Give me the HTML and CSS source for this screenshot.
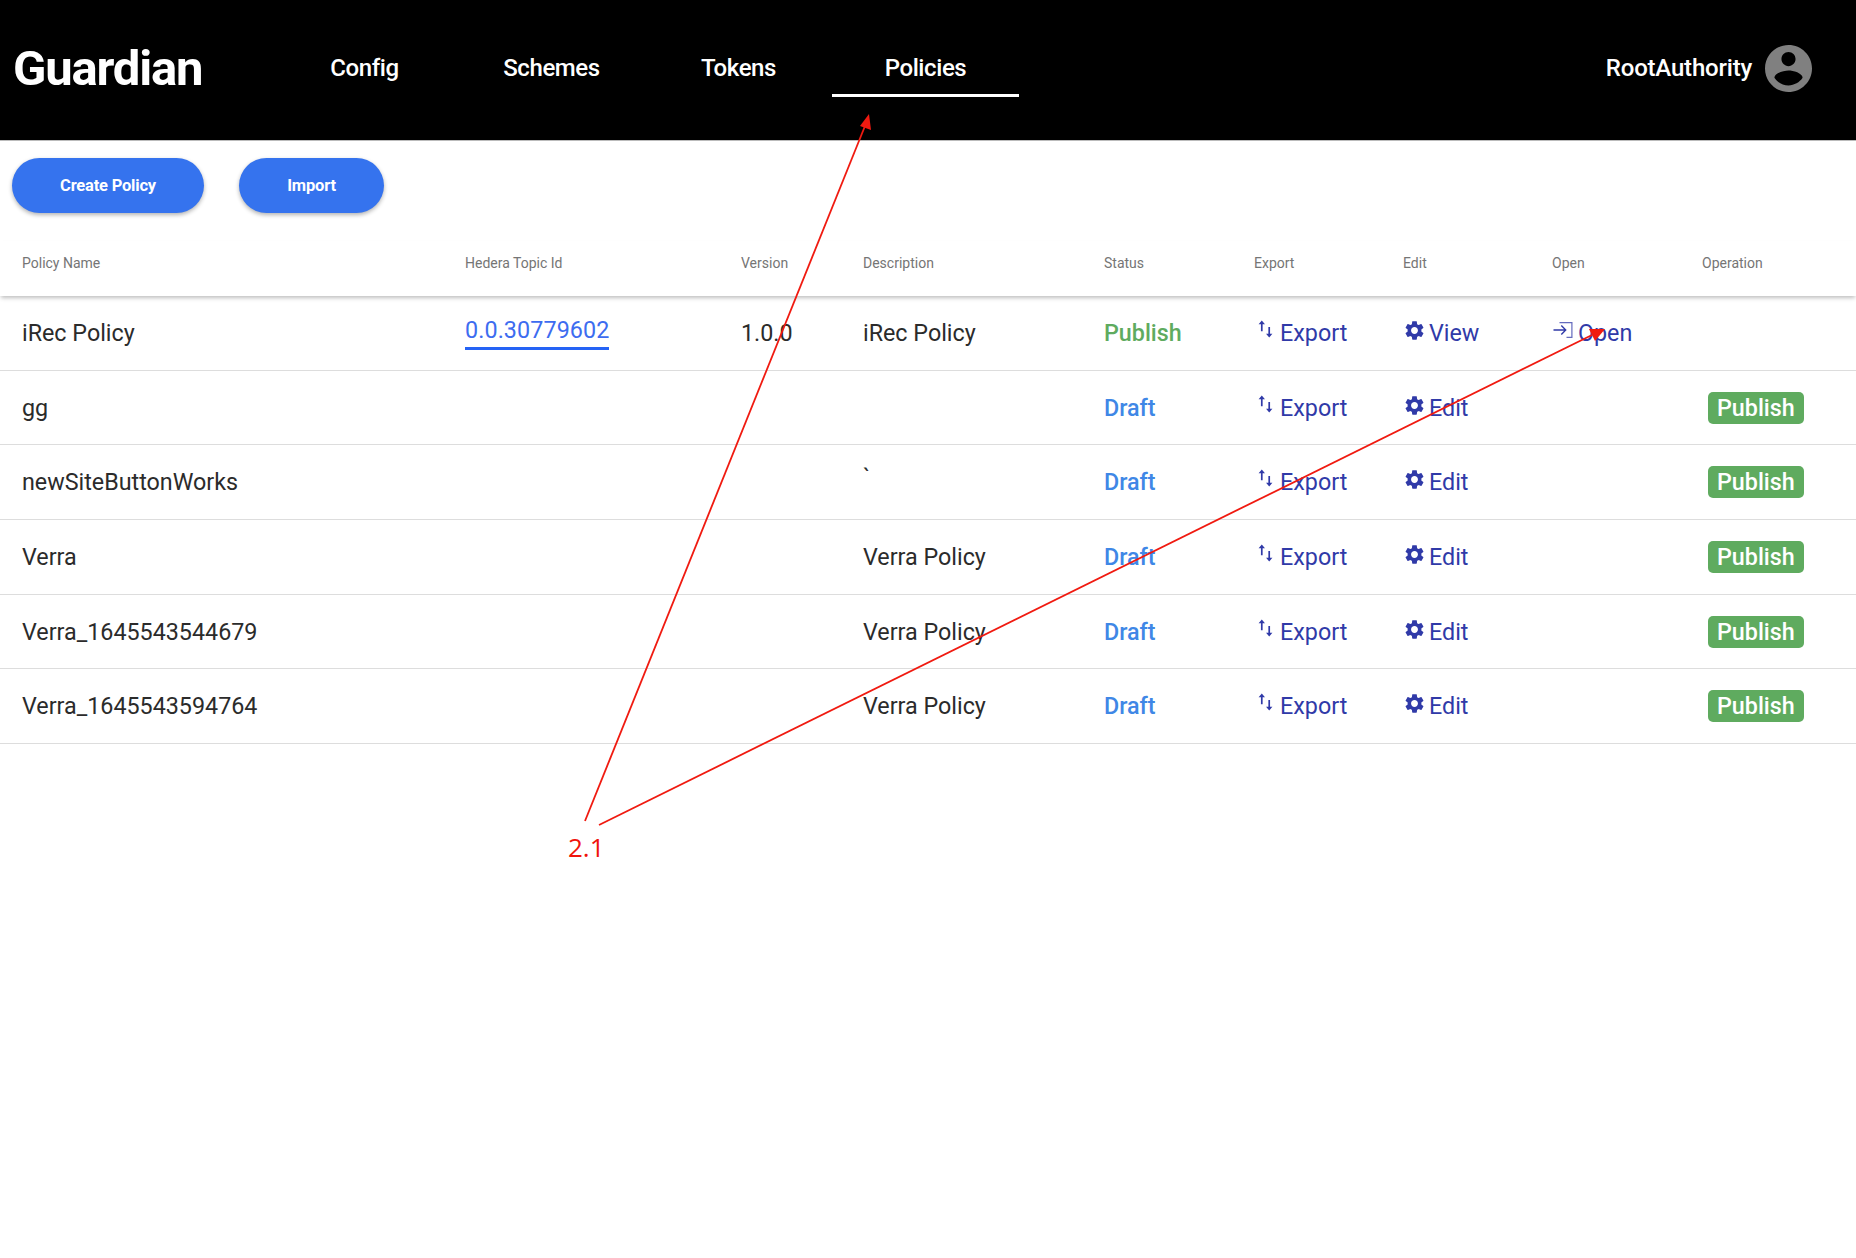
FILE: index.html
```html
<!DOCTYPE html>
<html lang="en">
<head>
  <meta charset="UTF-8">
  <link rel="stylesheet" href="styles.css">
  <title>Guardian</title>
</head>
<body>
  <svg class="defs" width="0" height="0">
    <symbol id="gear" viewBox="0 0 24 24"><path d="M19.14 12.94c.04-.3.06-.61.06-.94 0-.32-.02-.64-.07-.94l2.03-1.58c.18-.14.23-.41.12-.61l-1.92-3.32c-.12-.22-.37-.29-.59-.22l-2.39.96c-.5-.38-1.03-.7-1.62-.94l-.36-2.54c-.04-.24-.24-.41-.48-.41h-3.84c-.24 0-.43.17-.47.41l-.36 2.54c-.59.24-1.13.57-1.62.94l-2.39-.96c-.22-.08-.47 0-.59.22L2.74 8.87c-.12.21-.08.47.12.61l2.03 1.58c-.05.3-.09.63-.09.94s.02.64.07.94l-2.03 1.58c-.18.14-.23.41-.12.61l1.92 3.32c.12.22.37.29.59.22l2.39-.96c.5.38 1.03.7 1.62.94l.36 2.54c.05.24.24.41.48.41h3.84c.24 0 .44-.17.47-.41l.36-2.54c.59-.24 1.13-.56 1.62-.94l2.39.96c.22.08.47 0 .59-.22l1.92-3.32c.12-.22.07-.47-.12-.61l-2.01-1.58zM12 15.6c-1.98 0-3.6-1.62-3.6-3.6s1.62-3.6 3.6-3.6 3.6 1.62 3.6 3.6-1.62 3.6-3.6 3.6z"/></symbol>
    <symbol id="swap" viewBox="0 0 16 18"><path d="M4.500 1 1.500 4.600h2.200V11h1.600V4.600h2.200zM11.500 17l3-3.600h-2.200V7h-1.600v6.400H8.500z"/></symbol>
    <symbol id="enter" viewBox="0 0 20 18"><path d="M0 8.200h10.500L7.300 5l1-1 4.900 5-4.900 5-1-1 3.200-3.300H0z"/><path d="M6 1h13v16H13v-1.200h4.800V2.200H6z" opacity=".75"/></symbol>
  </svg>

  <header class="topbar">
    <div class="logo">Guardian</div>
    <nav class="tabs">
      <a class="tab">Config</a>
      <a class="tab">Schemes</a>
      <a class="tab">Tokens</a>
      <a class="tab active">Policies</a>
    </nav>
    <div class="user">
      <span>RootAuthority</span>
      <svg class="avatar" viewBox="2 2 20 20"><path d="M12 2C6.480 2 2 6.480 2 12s4.480 10 10 10 10-4.480 10-10S17.520 2 12 2zm0 3c1.660 0 3 1.340 3 3s-1.340 3-3 3-3-1.340-3-3 1.340-3 3-3zm0 14.200c-2.500 0-4.710-1.280-6-3.220.03-1.990 4-3.080 6-3.080 1.990 0 5.970 1.090 6 3.080-1.290 1.940-3.500 3.220-6 3.220z"/></svg>
    </div>
  </header>

  <div class="actions">
    <button class="pill pill-create">Create Policy</button>
    <button class="pill pill-import">Import</button>
  </div>

  <div class="policies">
    <div class="row head">
      <div>Policy Name</div><div>Hedera Topic Id</div><div>Version</div><div>Description</div>
      <div>Status</div><div>Export</div><div>Edit</div><div>Open</div><div>Operation</div>
    </div>

    <div class="row">
      <div>iRec Policy</div>
      <div><a class="topic">0.0.30779602</a></div>
      <div>1.0.0</div>
      <div>iRec Policy</div>
      <div class="published">Publish</div>
      <div><a class="act"><svg class="ic-swap"><use href="#swap"/></svg>Export</a></div>
      <div><a class="act"><svg class="ic-gear"><use href="#gear"/></svg>View</a></div>
      <div><a class="act"><svg class="ic-enter"><use href="#enter"/></svg>Open</a></div>
      <div></div>
    </div>
    <div class="row">
      <div>gg</div><div></div><div></div><div></div>
      <div class="draft">Draft</div>
      <div><a class="act"><svg class="ic-swap"><use href="#swap"/></svg>Export</a></div>
      <div><a class="act"><svg class="ic-gear"><use href="#gear"/></svg>Edit</a></div>
      <div></div>
      <div><span class="publish-btn">Publish</span></div>
    </div>
    <div class="row">
      <div>newSiteButtonWorks</div><div></div><div></div><div class="tick">`</div>
      <div class="draft">Draft</div>
      <div><a class="act"><svg class="ic-swap"><use href="#swap"/></svg>Export</a></div>
      <div><a class="act"><svg class="ic-gear"><use href="#gear"/></svg>Edit</a></div>
      <div></div>
      <div><span class="publish-btn">Publish</span></div>
    </div>
    <div class="row">
      <div>Verra</div><div></div><div></div><div>Verra Policy</div>
      <div class="draft">Draft</div>
      <div><a class="act"><svg class="ic-swap"><use href="#swap"/></svg>Export</a></div>
      <div><a class="act"><svg class="ic-gear"><use href="#gear"/></svg>Edit</a></div>
      <div></div>
      <div><span class="publish-btn">Publish</span></div>
    </div>
    <div class="row">
      <div>Verra_1645543544679</div><div></div><div></div><div>Verra Policy</div>
      <div class="draft">Draft</div>
      <div><a class="act"><svg class="ic-swap"><use href="#swap"/></svg>Export</a></div>
      <div><a class="act"><svg class="ic-gear"><use href="#gear"/></svg>Edit</a></div>
      <div></div>
      <div><span class="publish-btn">Publish</span></div>
    </div>
    <div class="row">
      <div>Verra_1645543594764</div><div></div><div></div><div>Verra Policy</div>
      <div class="draft">Draft</div>
      <div><a class="act"><svg class="ic-swap"><use href="#swap"/></svg>Export</a></div>
      <div><a class="act"><svg class="ic-gear"><use href="#gear"/></svg>Edit</a></div>
      <div></div>
      <div><span class="publish-btn">Publish</span></div>
    </div>
  </div>

  <!-- annotation drawn on top of the screenshot -->
  <svg class="notes" width="1856" height="1258" viewBox="0 0 1856 1258">
    <line x1="585" y1="821" x2="865" y2="126"/>
    <polygon points="869,114 871,130 860,126"/>
    <line x1="599" y1="825" x2="1592" y2="335"/>
    <polygon points="1605,329 1595,341 1589,329"/>
  </svg>
  <div class="note-label">2.1</div>
</body>
</html>
```

FILE: styles.css
```css
body {
  margin: 0;
  width: 1856px;
  height: 1258px;
  overflow: hidden;
  position: relative;
  background: #fff;
  font-family: Roboto, sans-serif;
  color: #2b2b2b;
}

.defs {
  position: absolute;
}

/* header */
.topbar {
  height: 141px;
  box-sizing: border-box;
  background: #000;
  border-bottom: 1px solid #bbb;
  display: flex;
  align-items: center;
  color: #fff;
  padding-bottom: 4px;
}

.logo {
  width: 271px;
  padding-left: 13px;
  box-sizing: border-box;
  font-size: 49px;
  font-weight: 700;
  letter-spacing: -1.2px;
}

.tabs {
  display: flex;
  height: 97px;
  align-self: flex-start;
}

.tab {
  width: 187px;
  display: flex;
  align-items: flex-end;
  justify-content: center;
  box-sizing: border-box;
  padding-bottom: 15px;
  font-size: 24px;
  font-weight: 500;
  letter-spacing: -0.4px;
}

.tab.active {
  border-bottom: 3px solid #fff;
  padding-bottom: 12px;
}

.user {
  margin-left: auto;
  margin-right: 44px;
  display: flex;
  align-items: center;
  gap: 13px;
  font-size: 24px;
  font-weight: 500;
  letter-spacing: -0.2px;
}

.avatar {
  width: 47px;
  height: 47px;
  fill: #808080;
}

/* buttons */
.actions {
  display: flex;
  gap: 35px;
  padding: 17px 0 0 12px;
}

.pill {
  height: 55px;
  border: none;
  border-radius: 28px;
  background: #3573ee;
  color: #fff;
  font-family: Roboto, sans-serif;
  font-size: 16.5px;
  font-weight: 700;
  letter-spacing: -0.2px;
  box-shadow: 0 2px 4px rgba(0, 0, 0, 0.3);
}

.pill-create {
  width: 192px;
}

.pill-import {
  width: 145px;
}

/* table */
.policies {
  margin-top: 28px;
}

.row {
  display: grid;
  grid-template-columns: 443px 276px 122px 241px 150px 149px 149px 150px 176px;
  height: 74.7px;
  box-sizing: border-box;
  align-items: center;
  border-bottom: 1px solid #ddd;
  font-size: 23.3px;
}

.row > div {
  padding-left: 22px;
  white-space: nowrap;
}

.head {
  height: 55px;
  padding-bottom: 11px;
  border-bottom: none;
  box-shadow: 0 3px 4px -1px rgba(0, 0, 0, 0.25);
  font-size: 14px;
  color: #757575;
  position: relative;
}

.topic {
  display: inline-block;
  color: #3d6cf0;
  border-bottom: 3px solid #2563f5;
  padding-bottom: 3px;
  margin-top: -6px;
  letter-spacing: 0.1px;
}

.published {
  color: #5fab5f;
  font-weight: 500;
}

.draft {
  color: #3f87e6;
  font-weight: 500;
}

.act {
  display: inline-flex;
  vertical-align: top;
  height: 28px;
  line-height: 28px;
  color: #303aa8;
}

.act svg {
  align-self: flex-start;
  fill: #303aa8;
}

.ic-swap {
  width: 17px;
  height: 20px;
  margin: 0 6px 0 3px;
}

.ic-gear {
  width: 23px;
  height: 23px;
  margin: 0 3px 0 0;
}

.ic-enter {
  width: 21px;
  height: 18px;
  margin: 2px 4px 0 1px;
}

.publish-btn {
  display: inline-block;
  margin-left: 6px;
  padding: 0 9px;
  height: 32px;
  line-height: 32px;
  border-radius: 5px;
  background: #5fab5f;
  color: #fff;
  font-weight: 500;
}

.tick {
  margin-top: -8px;
}

/* annotation */
.notes {
  position: absolute;
  left: 0;
  top: 0;
}

.notes line {
  stroke: #f01a10;
  stroke-width: 1.8;
}

.notes polygon {
  fill: #f01a10;
}

.note-label {
  position: absolute;
  left: 568px;
  top: 829px;
  font-family: "Open Sans", sans-serif;
  font-size: 26px;
  color: #f0140c;
}
```
